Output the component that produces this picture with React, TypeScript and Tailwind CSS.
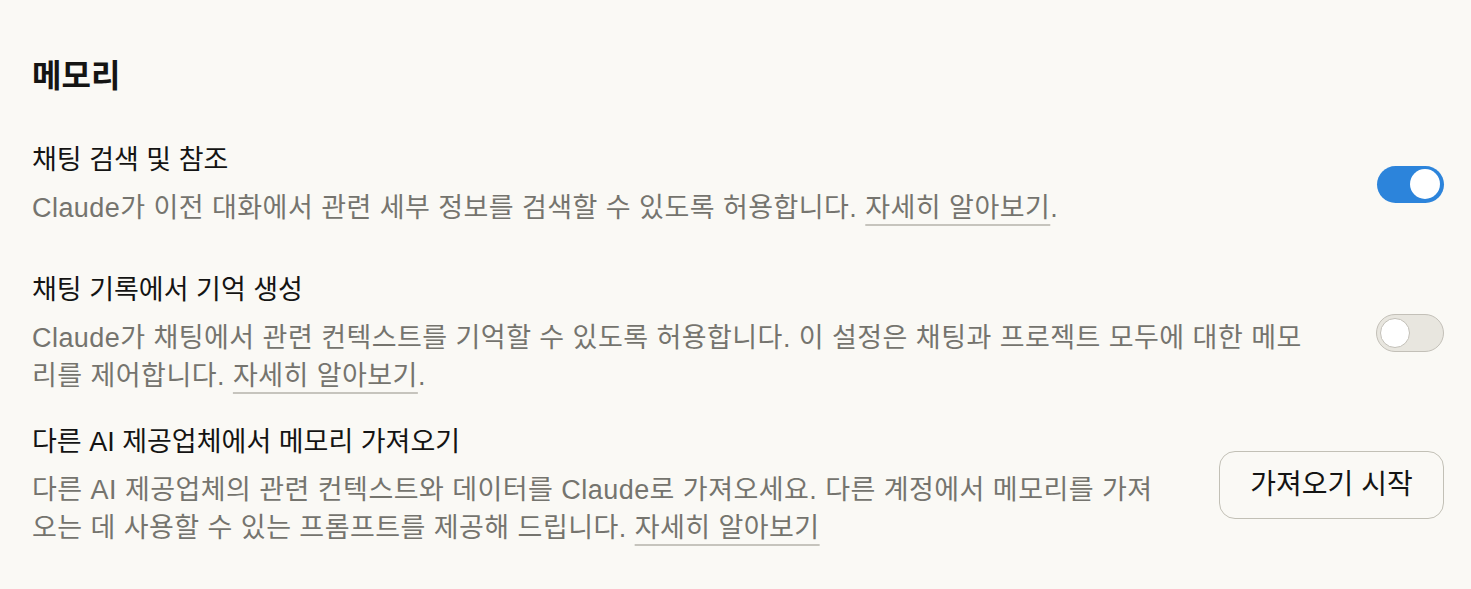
import React from "react";

const font = { fontFamily: '"Liberation Sans", "Noto Sans CJK KR", sans-serif' };

function Toggle({ on }: { on: boolean }) {
  return on ? (
    <div className="flex h-[37px] w-[67px] shrink-0 items-center justify-end rounded-full bg-[#2c84db] pr-[4px]">
      <div className="h-[30px] w-[30px] rounded-full bg-white" />
    </div>
  ) : (
    <div className="flex h-[38px] w-[68px] shrink-0 items-center justify-start rounded-full border border-[#c3c0b8] bg-[#e8e6df] pl-[3px]">
      <div className="h-[30px] w-[30px] rounded-full border border-[#c3c0b8] bg-white" />
    </div>
  );
}

function Link({ children }: { children: React.ReactNode }) {
  return (
    <span className="underline decoration-[#c6c4bd] decoration-2 underline-offset-[7px]">{children}</span>
  );
}

export default function App() {
  return (
    <div className="min-h-[589px] w-full bg-[#faf9f5] pl-8 pr-[27px] pt-[52px]" style={font}>
      <h1 className="text-[32px] font-bold leading-[48px] text-[#141413]">메모리</h1>
      <div className="mt-[41px] flex flex-col">
        <div className="flex items-center gap-14">
          <div className="flex-1">
            <div className="text-[27px] leading-[38px] text-[#141413]">채팅 검색 및 참조</div>
            <div className="mt-[10px] text-[27px] leading-[38px] tracking-[0.45px] text-[#75746e]">
              Claude가 이전 대화에서 관련 세부 정보를 검색할 수 있도록 허용합니다. <Link>자세히 알아보기</Link>.
            </div>
          </div>
          <Toggle on />
        </div>
        <div className="mt-[44px] flex items-center gap-14">
          <div className="flex-1">
            <div className="text-[27px] leading-[38px] text-[#141413]">채팅 기록에서 기억 생성</div>
            <div className="mt-[10px] text-[27px] leading-[38px] tracking-[0.45px] text-[#75746e]">
              Claude가 채팅에서 관련 컨텍스트를 기억할 수 있도록 허용합니다. 이 설정은 채팅과 프로젝트 모두에 대한 메모리를 제어합니다. <Link>자세히 알아보기</Link>.
            </div>
          </div>
          <Toggle on={false} />
        </div>
        <div className="mt-[28px] flex items-center gap-14">
          <div className="flex-1">
            <div className="text-[27px] leading-[38px] text-[#141413]">다른 AI 제공업체에서 메모리 가져오기</div>
            <div className="mt-[10px] text-[27px] leading-[38px] tracking-[0.45px] text-[#75746e]">
              다른 AI 제공업체의 관련 컨텍스트와 데이터를 Claude로 가져오세요. 다른 계정에서 메모리를 가져오는 데 사용할 수 있는 프롬프트를 제공해 드립니다. <Link>자세히 알아보기</Link>
            </div>
          </div>
          <button className="h-[68px] w-[225px] shrink-0 rounded-[16px] border border-[#c2c0b6] bg-[#faf9f5] text-[28px] text-[#141413]">
            가져오기 시작
          </button>
        </div>
      </div>
    </div>
  );
}
